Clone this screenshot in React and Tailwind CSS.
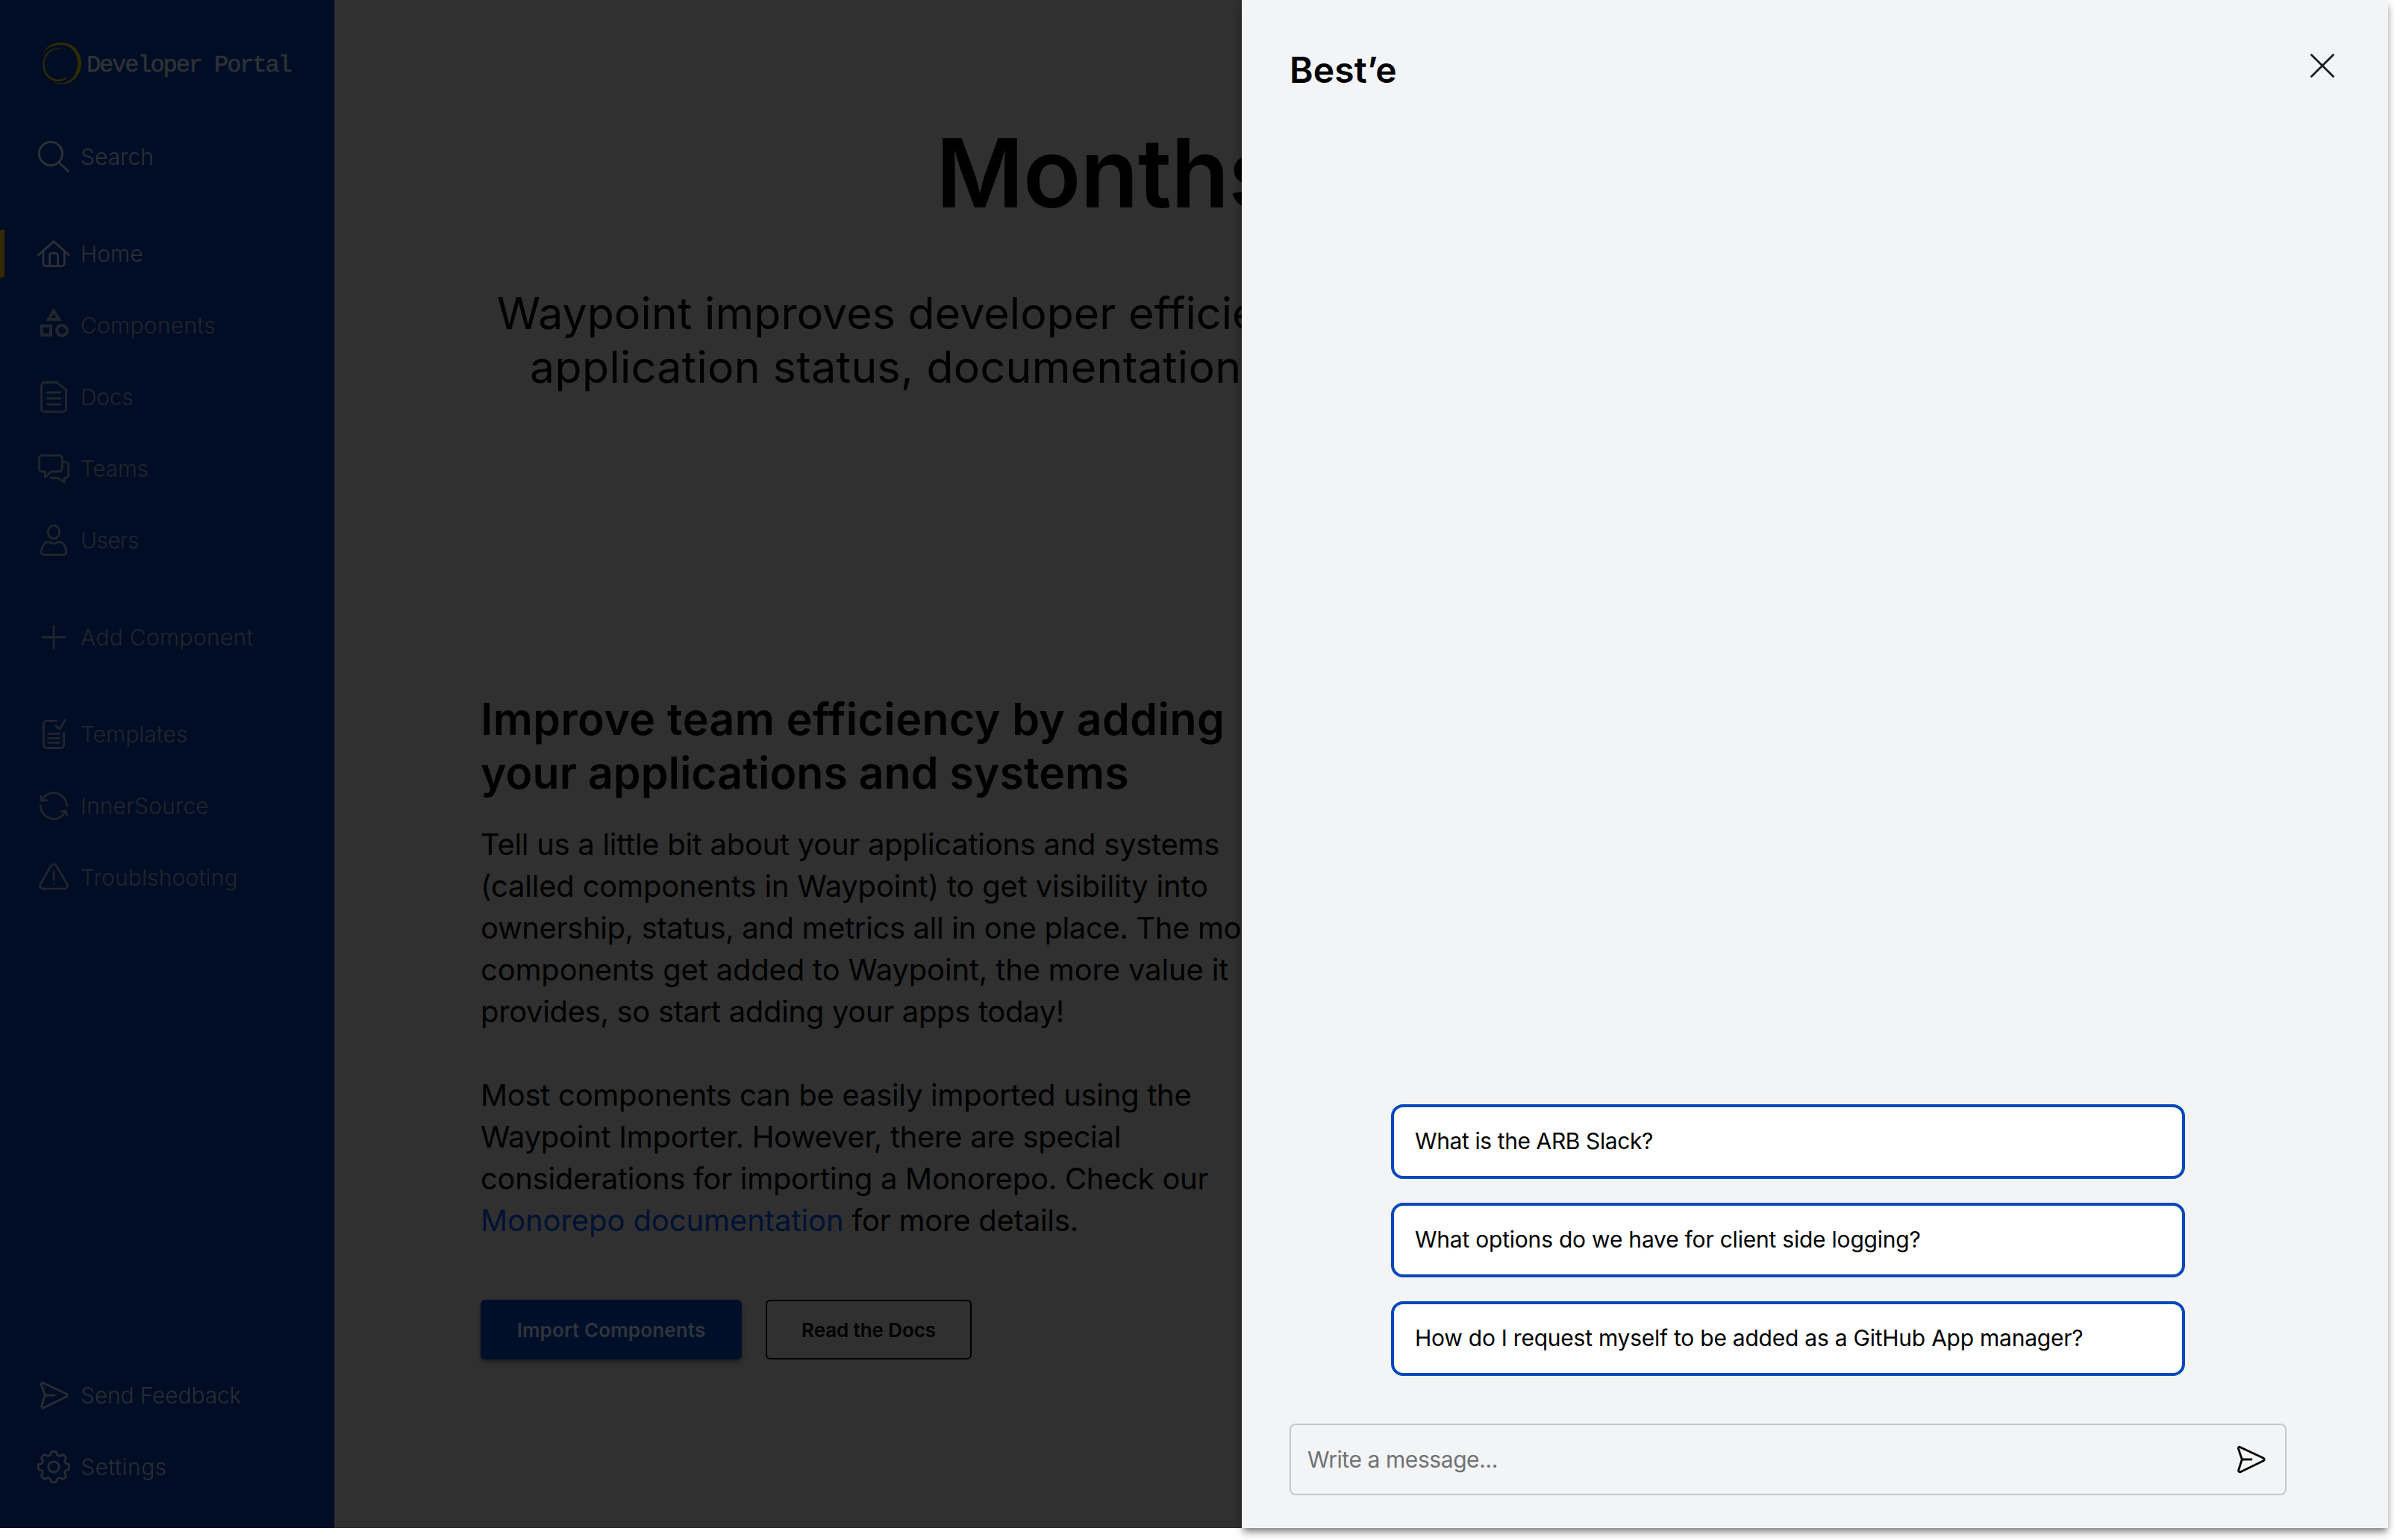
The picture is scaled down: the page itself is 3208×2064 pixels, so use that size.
import React, { useState } from "react";

const toothAngles = [0, 45, 90, 135, 180, 225, 270, 315];

const icons = {
  search: (
    <>
      <circle cx="20" cy="20" r="15.6" />
      <path d="M31 32 43.5 43.5" />
    </>
  ),
  home: (
    <>
      <path d="M3.5 25.8 24 7.6 44.5 25.8" />
      <path d="M10 21v16a3.6 3.6 0 0 0 3.6 3.6h21.2a3.6 3.6 0 0 0 3.6-3.6V21" />
      <path d="M18.6 40.6V26.4a3 3 0 0 1 3-3h5a3 3 0 0 1 3 3v14.2" />
    </>
  ),
  components: (
    <g strokeWidth="4" strokeLinejoin="miter">
      <path d="M24 4.6 31 16H17z" />
      <path d="M8 24.7h12v12.3H8z" />
      <circle cx="35" cy="31" r="7" />
    </g>
  ),
  docs: (
    <>
      <path d="M11.5 4.5h16.7L40.5 14.6V39.8a4 4 0 0 1-4 4h-25a4 4 0 0 1-4-4V8.5a4 4 0 0 1 4-4z" />
      <path d="M15.2 18h17.6M15.2 26h17.6M15.2 34h17.6" />
    </>
  ),
  teams: (
    <>
      <path d="M8.5 6.4h22.6a4.2 4.2 0 0 1 4.2 4.2v13.2a4.2 4.2 0 0 1-4.2 4.2H20.6l-8.2 7.8V28H8.5a4.2 4.2 0 0 1-4.2-4.2V10.6a4.2 4.2 0 0 1 4.2-4.2z" />
      <path d="M35.5 15.2h4.2a4 4 0 0 1 4 4v13.3a4 4 0 0 1-4 4h-1.5v6.2l-6.6-4.9c-1.2-.9-2-1.3-3.5-1.3h-8" />
    </>
  ),
  users: (
    <>
      <ellipse cx="24" cy="13" rx="7.7" ry="8.9" />
      <path d="M16.5 26.3c3 0 4 2 7.5 2s4.5-2 7.5-2c6 0 9.2 7.8 9.2 13.5a3.7 3.7 0 0 1-3.7 3.7H11a3.7 3.7 0 0 1-3.7-3.7c0-5.7 3.2-13.5 9.2-13.5z" />
    </>
  ),
  add: <path d="M24 9.2v29.6M9.2 24h29.6" />,
  templates: (
    <>
      <path d="M27.5 6.2H14.6a4.2 4.2 0 0 0-4.2 4.2v27.9a4.2 4.2 0 0 0 4.2 4.2h18.8a4.2 4.2 0 0 0 4.2-4.2V22" />
      <path d="M26.4 12.3 32 17.2 39.6 4.6" />
      <path d="M16.5 23.4h15M16.5 29.4h15M16.5 35.4h15" />
    </>
  ),
  innersource: (
    <>
      <path d="M7.8 17.2a17.6 17.6 0 0 1 33.8 7" />
      <path d="M6.4 23.8a17.6 17.6 0 0 0 33.8 7" />
      <path d="M6.4 11 7.8 17.2 14.6 16.4" />
      <path d="M34 31.6 40.2 30.8 41.8 37.2" />
    </>
  ),
  warning: (
    <>
      <path d="M20.6 8.3a4 4 0 0 1 6.8 0l14.5 24.6a4.2 4.2 0 0 1-3.6 6.3H9.7a4.2 4.2 0 0 1-3.6-6.3z" />
      <path d="M24 15.8v11.4M24 32.3v.4" />
    </>
  ),
  send: (
    <>
      <path d="M9.6 7.4 41.2 22.3a1.9 1.9 0 0 1 0 3.4L10.4 40.7a1.9 1.9 0 0 1-2.7-2.2l4.6-14.5L7.4 9.5a1.7 1.7 0 0 1 2.2-2.1z" />
      <path d="M12.5 24H25" />
    </>
  ),
  settings: (
    <>
      {toothAngles.map((a) => (
        <path
          key={a}
          transform={`translate(24 24) rotate(${a})`}
          d="M-6.2-15Q-4.4-15.8-4.1-17.4L-3.8-18.9Q-3.3-20.7-1.7-20.7H1.7Q3.3-20.7 3.8-18.9L4.1-17.4Q4.4-15.8 6.2-15"
        />
      ))}
      <circle cx="24" cy="24" r="7.2" />
    </>
  ),
};

function Icon({ name, className }) {
  return (
    <svg
      viewBox="0 0 48 48"
      className={className}
      fill="none"
      stroke="currentColor"
      strokeWidth="2.8"
      strokeLinecap="round"
      strokeLinejoin="round"
    >
      {icons[name]}
    </svg>
  );
}

const navGroups = [
  [{ icon: "search", label: "Search", color: "text-[#2c3238]" }],
  [
    { icon: "home", label: "Home", color: "text-[#2b2f38]", active: true },
    { icon: "components", label: "Components", color: "text-[#20262e]", iconColor: "text-[#22272d]", tracking: "tracking-[0.25px]" },
    { icon: "docs", label: "Docs", color: "text-[#20262e]", tracking: "tracking-[-0.3px]" },
    { icon: "teams", label: "Teams", color: "text-[#20262e]", tracking: "tracking-[-0.4px]" },
    { icon: "users", label: "Users", color: "text-[#20262e]", tracking: "tracking-[-0.7px]" },
  ],
  [{ icon: "add", label: "Add Component", color: "text-[#20262e]", tracking: "tracking-[0.3px]" }],
  [
    { icon: "templates", label: "Templates", color: "text-[#20262e]" },
    { icon: "innersource", label: "InnerSource", color: "text-[#20262e]", tracking: "tracking-[0.15px]" },
    { icon: "warning", label: "Troublshooting", color: "text-[#20262e]", tracking: "tracking-[0.15px]" },
  ],
];

const footerItems = [
  { icon: "send", label: "Send Feedback", color: "text-[#282d34]", tracking: "tracking-[-0.15px]" },
  { icon: "settings", label: "Settings", color: "text-[#282d34]", tracking: "tracking-[0.5px]" },
];

const suggestions = [
  { text: "What is the ARB Slack?", tracking: "tracking-[-0.4px]" },
  { text: "What options do we have for client side logging?", tracking: "tracking-[-0.22px]" },
  { text: "How do I request myself to be added as a GitHub App manager?", tracking: "tracking-[-0.24px]" },
];

function NavItem({ item }) {
  return (
    <a href="#" className={`flex h-24 items-center ${item.color}`}>
      <span className={`h-16 w-1.5 ${item.active ? "bg-[#332a00]" : ""}`} />
      <Icon name={item.icon} className={`ml-[42px] h-12 w-12 ${item.iconColor || ""}`} />
      <span className={`ml-3 pb-px text-[30px] leading-10 font-light whitespace-nowrap ${item.tracking || ""}`}>
        {item.label}
      </span>
    </a>
  );
}

function Logo() {
  return (
    <div className="flex items-center pt-14 pl-14">
      <svg viewBox="0 0 54 58" className="h-[58px] w-[54px]" fill="#332c00">
        <path d="M1 16C6 6 15 1 26 1c15 0 27 12 27 28S40 57 27 57c-5 0-9-1-14-4 4 2 8 2.600 12 2.600C39 55.600 48 43 48 29S39 4 26 4C15 4 7 8 1 16z" />
        <path d="M35 9C16 3 3 14 3 29c0 14 9 23 20 23 6 0 10-2 14-6-4 2-8 3.600-13 3.600C13 49.600 5 40 5 29 5 14 18 5 35 9z" transform="translate(-1.500 1)" />
      </svg>
      <span className="ml-1.5 pt-[5px] font-['Liberation_Mono',monospace] text-[32px] leading-10 tracking-[-2.1px] whitespace-nowrap text-[#2e3238] [-webkit-text-stroke:0.6px_#2e3238]">
        Developer Portal
      </span>
    </div>
  );
}

function Sidebar() {
  return (
    <aside className="flex h-full w-[448px] shrink-0 flex-col bg-[#000d24]">
      <Logo />
      <nav className="mt-12 flex flex-col gap-[34px]">
        {navGroups.map((group, i) => (
          <div key={i}>
            {group.map((item) => (
              <NavItem key={item.label} item={item} />
            ))}
          </div>
        ))}
      </nav>
      <div className="mt-auto pb-[34px]">
        {footerItems.map((item) => (
          <NavItem key={item.label} item={item} />
        ))}
      </div>
    </aside>
  );
}

function Content() {
  return (
    <main className="h-full w-[1216px] shrink-0 overflow-hidden bg-[#303030] whitespace-nowrap text-black">
      <h1 className="pt-[168px] pl-[806px] text-[128px] leading-[128px] font-[640] tracking-[-1.2px]">Months</h1>
      <div className="mt-[88px] text-[59px] leading-[72px]">
        <p className="pl-[218px] tracking-[0.1px]">Waypoint improves developer efficiency</p>
        <p className="pl-[262px] tracking-[0.34px]">application status, documentation</p>
      </div>
      <section className="mt-[400px] pl-[196px]">
        <h2 className="text-[59px] leading-[72px] font-semibold">
          <span className="tracking-[0.43px]">Improve team efficiency by adding</span>
          <br />
          your applications and systems
        </h2>
        <p className="mt-8 text-[40px] leading-[56px] tracking-[-0.29px]">
          Tell us a little bit about your applications and systems
          <br />
          <span className="tracking-[-0.2px]">(called components in Waypoint) to get visibility into</span>
          <br />
          <span className="tracking-[-0.37px]">ownership, status, and metrics all in one place. The more</span>
          <br />
          <span className="tracking-[-0.17px]">components get added to Waypoint, the more value it</span>
          <br />
          <span className="tracking-[-0.34px]">provides, so start adding your apps today!</span>
        </p>
        <p className="mt-14 text-[40px] leading-[56px] tracking-[-0.29px]">
          Most components can be easily imported using the
          <br />
          Waypoint Importer. However, there are special
          <br />
          considerations for importing a Monorepo. Check our
          <br />
          <a href="#" className="tracking-[-0.08px] text-[#001233]">Monorepo documentation</a>
          <span className="tracking-[-0.24px]"> for more details.</span>
        </p>
        <div className="mt-[78px] flex gap-8">
          <button className="h-20 w-[350px] rounded-md bg-[#000f29] text-[26px] font-semibold tracking-[0.15px] text-[#30343c] shadow-[0_4px_6px_rgba(0,0,0,0.35)]">
            Import Components
          </button>
          <button className="h-20 w-[276px] rounded-md border-2 border-black text-[26px] font-semibold tracking-[-0.1px]">
            Read the Docs
          </button>
        </div>
      </section>
    </main>
  );
}

function ChatPanel() {
  const [message, setMessage] = useState("");

  return (
    <section className="relative flex h-full w-[1536px] shrink-0 flex-col bg-[#f3f4f6] pl-16 text-black shadow-[0_6px_8px_-3px_rgba(0,0,0,0.4),0_8px_10px_0_rgba(0,0,0,0.14),0_2px_16px_0_rgba(0,0,0,0.12)]">
      <header className="flex items-start justify-between pt-16 pr-16">
        <h2 className="text-[48px] leading-[60px] font-[640] tracking-[0.1px]">Best’e</h2>
        <button aria-label="Close" className="text-[#1c1e21]">
          <svg viewBox="0 0 48 48" className="h-12 w-12" fill="none" stroke="currentColor" strokeWidth="2.8" strokeLinecap="round">
            <path d="M9.400 9.400 38.600 38.600M38.600 9.400 9.400 38.600" />
          </svg>
        </button>
      </header>
      <div className="mt-auto ml-[136px] flex w-[1064px] flex-col gap-8">
        {suggestions.map((s) => (
          <button
            key={s.text}
            onClick={() => setMessage(s.text)}
            className={`h-[100px] rounded-2xl border-4 border-[#0047bb] bg-white px-7 pb-0.5 text-left text-[30px] whitespace-nowrap ${s.tracking}`}
          >
            {s.text}
          </button>
        ))}
      </div>
      <form className="mt-16 mb-11 flex h-24 w-[1336px] items-center rounded-lg border-2 border-[#c6c7c9] pr-[22px] pl-[22px]">
        <input
          value={message}
          onChange={(e) => setMessage(e.target.value)}
          placeholder="Write a message..."
          className="h-full grow text-[30px] tracking-[-0.42px] outline-none placeholder:text-[#707274]"
        />
        <Icon name="send" className="h-12 w-12" />
      </form>
    </section>
  );
}

export default function App() {
  return (
    <div className="h-[2064px] w-[3208px] overflow-hidden bg-white font-['Inter',sans-serif]">
      <div className="flex h-[2048px] w-[3200px]">
        <Sidebar />
        <Content />
        <ChatPanel />
      </div>
    </div>
  );
}
